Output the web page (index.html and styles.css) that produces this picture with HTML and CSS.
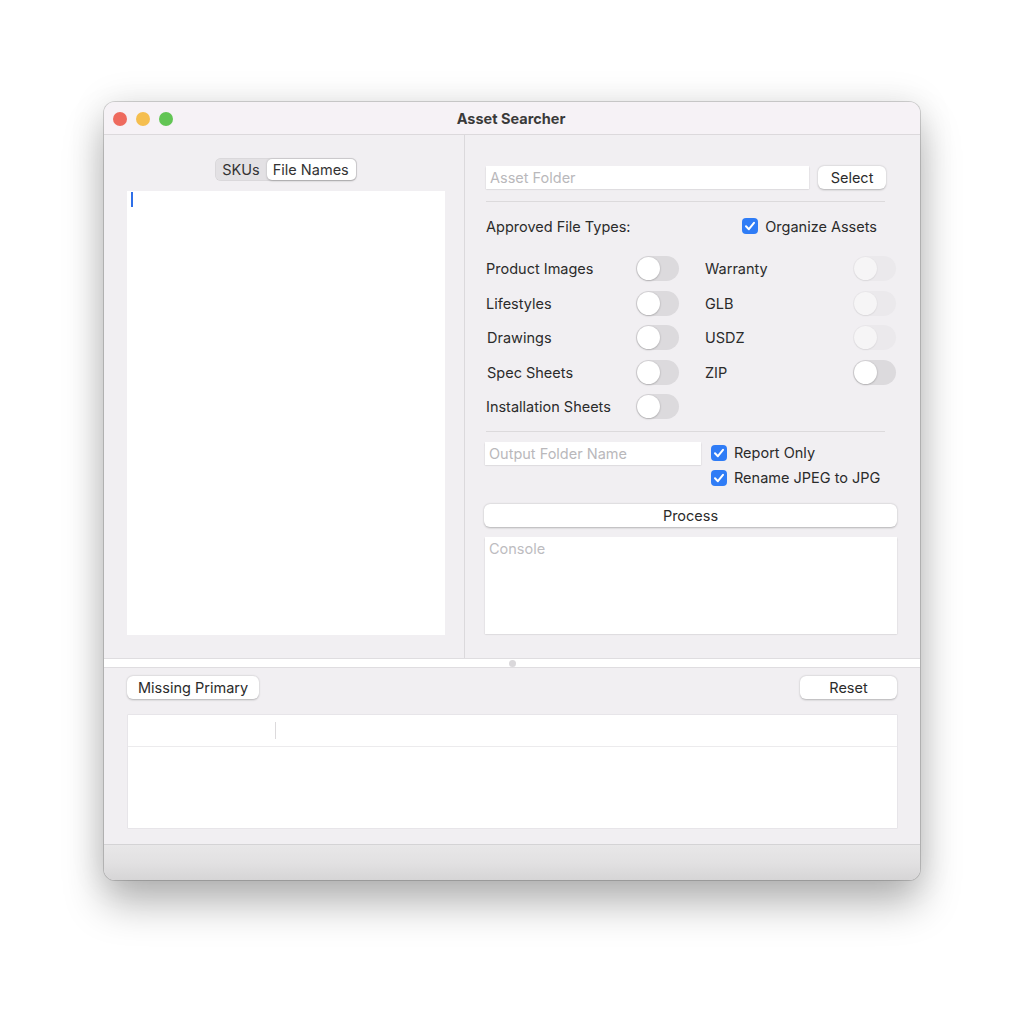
FILE: index.html
```html
<!DOCTYPE html>
<html lang="en">

<head>
  <meta charset="UTF-8">
  <meta name="viewport" content="width=device-width, initial-scale=1.0">
  <title>Asset Searcher</title>
  <link rel="stylesheet" href="styles.css">
</head>

<body>
  <div class="window">

    <!-- title bar -->
    <header class="titlebar">
      <div class="lights">
        <span class="light red"></span>
        <span class="light yellow"></span>
        <span class="light green"></span>
      </div>
      <h1 class="title">Asset Searcher</h1>
    </header>

    <div class="main">

      <!-- left pane -->
      <section class="left-pane">
        <div class="segmented">
          <span class="segment">SKUs</span>
          <span class="segment selected">File Names</span>
        </div>
        <div class="text-area">
          <span class="caret"></span>
        </div>
      </section>

      <!-- right pane -->
      <section class="right-pane">
        <div class="folder-row">
          <div class="field folder-field">Asset Folder</div>
          <button class="btn select-btn">Select</button>
        </div>

        <hr class="sep">

        <div class="types-row">
          <span class="label">Approved File Types:</span>
          <label class="check">
            <span class="box"><svg viewBox="0 0 16 16"><path d="M4 8.3 6.9 11.2 12 4.8" /></svg></span>
            Organize Assets
          </label>
        </div>

        <div class="toggles">
          <span class="label">Product Images</span>
          <span class="toggle"></span>
          <span class="label">Warranty</span>
          <span class="toggle disabled"></span>

          <span class="label">Lifestyles</span>
          <span class="toggle"></span>
          <span class="label">GLB</span>
          <span class="toggle disabled"></span>

          <span class="label nudge">Drawings</span>
          <span class="toggle"></span>
          <span class="label">USDZ</span>
          <span class="toggle disabled"></span>

          <span class="label nudge">Spec Sheets</span>
          <span class="toggle"></span>
          <span class="label">ZIP</span>
          <span class="toggle"></span>

          <span class="label">Installation Sheets</span>
          <span class="toggle"></span>
        </div>

        <hr class="sep sep-lower">

        <div class="output-row">
          <div class="field output-field">Output Folder Name</div>
          <div class="checks">
            <label class="check">
              <span class="box"><svg viewBox="0 0 16 16"><path d="M4 8.3 6.9 11.2 12 4.8" /></svg></span>
              Report Only
            </label>
            <label class="check">
              <span class="box"><svg viewBox="0 0 16 16"><path d="M4 8.3 6.9 11.2 12 4.8" /></svg></span>
              Rename JPEG to JPG
            </label>
          </div>
        </div>

        <button class="btn process-btn">Process</button>

        <div class="console">Console</div>
      </section>
    </div>

    <!-- split view handle -->
    <div class="splitter"><span class="grip"></span></div>

    <!-- bottom section -->
    <section class="bottom">
      <div class="bottom-bar">
        <button class="btn">Missing Primary</button>
        <button class="btn reset-btn">Reset</button>
      </div>
      <div class="table">
        <div class="table-head">
          <span class="col-first"></span>
          <span class="col-rest"></span>
        </div>
      </div>
    </section>

    <footer class="footer"></footer>
  </div>
</body>

</html>
```

FILE: styles.css
```css
*,
*::before,
*::after {
  box-sizing: border-box;
}

body {
  margin: 0;
  min-height: 1024px;
  padding: 102px 0 0 104px;
  background: #fff;
  font-family: Inter, "Noto Sans", sans-serif;
  font-size: 14px;
  color: #2b2b2b;
}

.window {
  width: 816px;
  height: 778px;
  display: flex;
  flex-direction: column;
  background: #f1eff2;
  border-radius: 11px;
  overflow: hidden;
  box-shadow:
    0 0 0 1px rgba(0, 0, 0, 0.16),
    0 24px 40px rgba(0, 0, 0, 0.28),
    0 0 36px rgba(0, 0, 0, 0.1);
}

/* title bar */

.titlebar {
  height: 33px;
  flex: none;
  position: relative;
  display: flex;
  align-items: center;
  justify-content: center;
  background: #f6f2f6;
  border-bottom: 1px solid #dcd9dc;
}

.lights {
  position: absolute;
  left: 9px;
  top: 10px;
  display: flex;
  gap: 9px;
}

.light {
  width: 14px;
  height: 14px;
  border-radius: 50%;
}

.red {
  background: #ee6a5e;
}

.yellow {
  background: #f5be4f;
}

.green {
  background: #62c554;
}

.title {
  margin: 0 0 0 -2px;
  font-size: 14.5px;
  font-weight: 700;
  color: #3a3a3a;
}

/* panes */

.main {
  height: 523px;
  flex: none;
  display: flex;
}

.left-pane {
  width: 361px;
  flex: none;
  display: flex;
  flex-direction: column;
  align-items: center;
  padding: 23px 19px 23px 23px;
  border-right: 1px solid #dbd9dc;
}

.segmented {
  display: flex;
  height: 23px;
  padding: 1px;
  border-radius: 6px;
  background: #e3e1e4;
  box-shadow: inset 0 0 0 0.5px rgba(0, 0, 0, 0.08);
  font-size: 14.5px;
}

.segment {
  display: flex;
  align-items: center;
  padding: 0 7px 0 6px;
  border-radius: 5px;
  color: #333;
}

.segment.selected {
  background: #fff;
  box-shadow: 0 0.5px 2px rgba(0, 0, 0, 0.25);
}

.text-area {
  margin-top: 10px;
  align-self: stretch;
  flex: 1;
  background: #fff;
  padding: 1px 4px;
}

.caret {
  display: block;
  width: 2px;
  height: 15px;
  background: #2f6fe8;
}

.right-pane {
  flex: 1;
  display: flex;
  flex-direction: column;
  padding: 31px 22px 24px 20px;
}

.field {
  height: 23px;
  display: flex;
  align-items: center;
  padding: 0 4px;
  background: #fff;
  color: #b9b8bb;
  font-size: 14.5px;
  box-shadow: 0 0.5px 1.5px rgba(0, 0, 0, 0.2);
}

.btn {
  height: 23px;
  padding: 0 11px;
  border: none;
  border-radius: 6px;
  background: #fff;
  font-family: inherit;
  font-size: 14.5px;
  color: #2b2b2b;
  box-shadow: 0 0.5px 2px rgba(0, 0, 0, 0.25);
}

.folder-row {
  display: flex;
  align-items: center;
  gap: 9px;
}

.folder-field {
  width: 323px;
  margin-left: 1px;
}

.select-btn {
  width: 68px;
}

.sep {
  width: 399px;
  margin: 12px 0 0 1px;
  border: none;
  border-top: 1px solid #dcdadc;
}

.types-row {
  margin-top: 14px;
  height: 20px;
  width: 392px;
  display: flex;
  align-items: center;
  justify-content: space-between;
  padding-left: 1px;
}

.label {
  font-size: 14.5px;
  color: #2b2b2b;
  white-space: nowrap;
}

.check {
  display: flex;
  align-items: center;
  gap: 7px;
  font-size: 14.5px;
}

.box {
  width: 16px;
  height: 16px;
  border-radius: 4px;
  background: #2f7cf6;
  display: flex;
}

.box svg {
  width: 16px;
  height: 16px;
  fill: none;
  stroke: #fff;
  stroke-width: 2;
  stroke-linecap: round;
  stroke-linejoin: round;
}

/* toggles */

.toggles {
  margin: 20px 0 0 1px;
  display: grid;
  grid-template-columns: 150px 43px 26px 148px 44px;
  grid-auto-rows: 25px;
  row-gap: 9.5px;
  align-items: center;
}

.toggles .label:nth-child(4n + 3) {
  grid-column: 4;
}

.toggles .nudge {
  padding-left: 1px;
}

.toggle {
  width: 43px;
  height: 25px;
  border-radius: 13px;
  background: #dcdadd;
  position: relative;
}

.toggle::after {
  content: "";
  position: absolute;
  left: 1px;
  top: 1px;
  width: 23px;
  height: 23px;
  border-radius: 50%;
  background: #fff;
  box-shadow: 0 0.5px 2px rgba(0, 0, 0, 0.3);
}

.toggle.disabled {
  background: #ebe9ec;
}

.toggle.disabled::after {
  background: #f6f5f6;
  box-shadow: 0 0.5px 1.5px rgba(0, 0, 0, 0.12);
}

.sep-lower {
  margin-top: 12px;
}

.output-row {
  margin-top: 10px;
  display: flex;
  gap: 10px;
}

.output-field {
  width: 216px;
}

.checks {
  display: flex;
  flex-direction: column;
  gap: 8px;
  padding-top: 2px;
}

.process-btn {
  margin-top: 18px;
  margin-left: -1px;
  width: 413px;
}

.console {
  margin: 10px 1px 0 0;
  flex: 1;
  background: #fff;
  padding: 3px 4px;
  color: #bdbcbf;
  font-size: 14.5px;
  box-shadow: 0 0.5px 1.5px rgba(0, 0, 0, 0.2);
}

/* splitter */

.splitter {
  height: 10px;
  flex: none;
  display: flex;
  align-items: center;
  justify-content: center;
  background: #fff;
  border-top: 1px solid #dfdde0;
  border-bottom: 1px solid #dfdde0;
}

.grip {
  width: 7px;
  height: 7px;
  border-radius: 50%;
  background: #dad8db;
}

/* bottom */

.bottom {
  flex: 1;
  display: flex;
  flex-direction: column;
  padding: 8px 23px 15px 23px;
}

.bottom-bar {
  display: flex;
  justify-content: space-between;
}

.reset-btn {
  width: 97px;
}

.table {
  margin: 16px 0 1px 1px;
  flex: 1;
  background: #fff;
  box-shadow: 0 0 0 0.5px #dedcdf;
}

.table-head {
  height: 32px;
  display: flex;
  align-items: center;
  border-bottom: 1px solid #ecebed;
}

.col-first {
  width: 148px;
  height: 17px;
  border-right: 1px solid #dcdadc;
}

.footer {
  height: 36px;
  flex: none;
  border-top: 1px solid #d4d3d5;
  background: linear-gradient(#e8e7e8, #e2e1e2 50%, #d6d5d6);
}
```
